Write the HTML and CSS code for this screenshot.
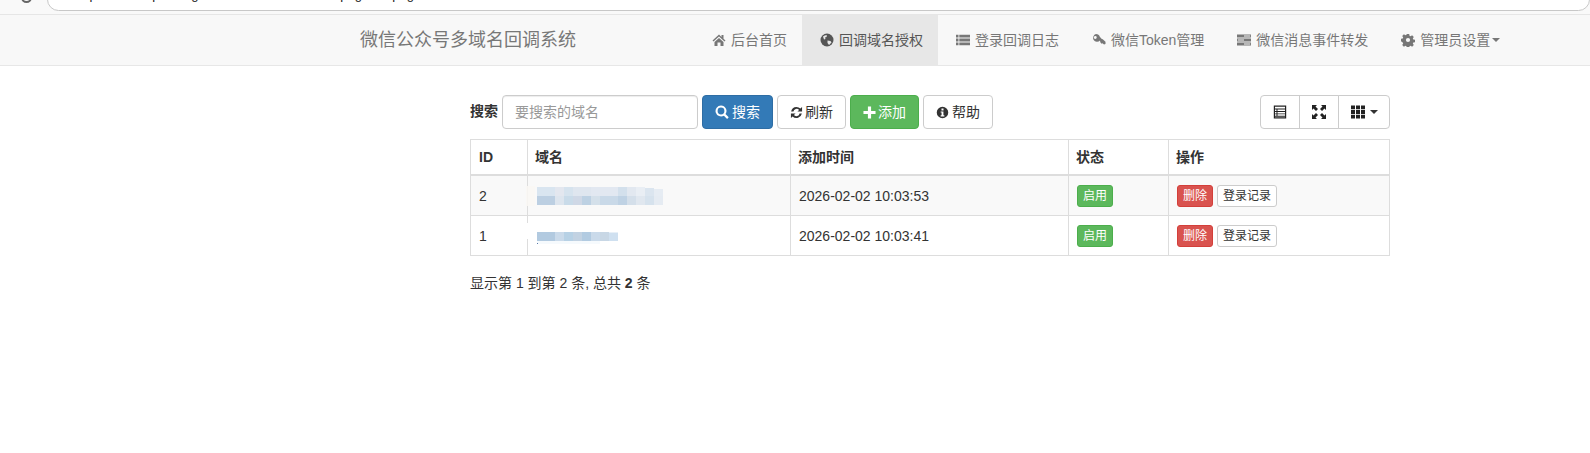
FILE: index.html
```html
<!DOCTYPE html>
<html lang="zh-CN">
<head>
<meta charset="utf-8">
<title>微信公众号多域名回调系统</title>
<link rel="stylesheet" href="styles.css">
</head>
<body>
<div class="chrome">
  <div class="reload"></div>
  <div class="address"><span class="page-icon"></span><span class="url">http://wechat.postbag.com/auth/domain/index/page/list/page</span></div>
</div>
<nav class="navbar">
  <a class="brand">微信公众号多域名回调系统</a>
  <ul class="nav">
    <li><a><svg class="ico" viewBox="0 0 14 14"><path d="M7 1.500 0.500 7.500l1 1L7 3.600l5.500 4.900 1-1L11.500 5.700V2h-2v1.900zM2.500 9v4h3V9.500h3V13h3V9L7 5z"/></svg>后台首页</a></li>
    <li class="active"><a><svg class="ico" viewBox="0 0 14 14"><circle cx="7" cy="7" r="6.500"/><path class="cut" d="M3 3.500c1.500-1 3-1.500 4-1.200L6.500 4 5 4.500 5.500 6 4 6.500zM7.500 7.500l3 .5 1 1.500L9 12 7.500 10z"/></svg>回调域名授权</a></li>
    <li><a><svg class="ico" viewBox="0 0 14 14"><path d="M0 1.700h2.500v2.800H0zM3.300 1.700H14v2.800H3.300zM0 5.600h2.500v2.800H0zM3.300 5.600H14v2.800H3.300zM0 9.500h2.500v2.800H0zM3.300 9.500H14v2.800H3.300z"/></svg>登录回调日志</a></li>
    <li><a><svg class="ico" viewBox="0 0 14 14"><path fill-rule="evenodd" d="M4 1a4 4 0 0 1 3.800 2.800l1.700 2 1.200.4 2.800 2.500v2.300l-1.500.4-1.500-1.100-.9.400-1.300-1.400-.3-1.700A4 4 0 1 1 4 1zM3.200 3a1.500 1.500 0 1 0 .1 3A1.500 1.500 0 0 0 3.200 3z"/></svg>微信Token管理</a></li>
    <li><a><svg class="ico" viewBox="0 0 14 14"><path d="M0 1.500h14v3H0zM0 5.500h14v3H0zM0 9.500h14v3H0z"/><path class="cut" d="M7 2.600h6.200v.8H7zM.8 6.600h6.200v.8H.8zM7 10.600h6.200v.8H7z"/></svg>微信消息事件转发</a></li>
    <li><a><svg class="ico" viewBox="0 0 14 14"><path fill-rule="evenodd" d="M5.800 1h2.400l.3 1.700 1.100.5 1.500-1 1.700 1.700-1 1.500.5 1.100 1.700.3v2.400l-1.700.3-.5 1.100 1 1.500-1.700 1.700-1.500-1-1.100.5-.3 1.700H5.800l-.3-1.700-1.100-.5-1.500 1-1.700-1.700 1-1.500-.5-1.100L0 8.200V5.800l1.700-.3.500-1.100-1-1.500 1.700-1.700 1.500 1 1.100-.5zM7 4.900a2.100 2.100 0 1 0 0 4.200 2.100 2.100 0 0 0 0-4.200z"/></svg>管理员设置<span class="caret"></span></a></li>
  </ul>
</nav>
<main class="content">
  <div class="toolbar">
    <form class="search">
      <label class="search-label">搜索</label>
      <input class="search-input" type="text" placeholder="要搜索的域名">
      <button type="button" class="btn btn-primary"><svg class="bi wide" viewBox="0 0 14 14"><path fill-rule="evenodd" d="M6 .5a5.500 5.500 0 0 1 4.500 8.600l3.200 3.200-1.600 1.600-3.200-3.200A5.500 5.500 0 1 1 6 .5zm0 2.100a3.400 3.400 0 1 0 0 6.800 3.400 3.400 0 0 0 0-6.800z"/></svg>搜索</button>
      <button type="button" class="btn"><svg class="bi tight" viewBox="0 0 14 14"><path d="M7 1a6 6 0 0 1 4.200 1.800L13 1v5H8l1.800-1.800A3.500 3.500 0 0 0 3.700 6H1.200A6 6 0 0 1 7 1zM1 8h5l-1.800 1.800a3.500 3.500 0 0 0 6.100-1.800h2.500a6 6 0 0 1-10 3.200L1 13z"/></svg>刷新</button>
      <button type="button" class="btn btn-success"><svg class="bi tight" viewBox="0 0 14 14"><path d="M5.300 .5h3.400v4.800h4.800v3.400H8.700v4.800H5.300V8.700H.5V5.300h4.800z"/></svg>添加</button>
      <button type="button" class="btn"><svg class="bi" viewBox="0 0 14 14"><path fill-rule="evenodd" d="M7 .8a6.200 6.200 0 1 1 0 12.400A6.200 6.200 0 0 1 7 .8zM5.900 2.800v2h2.200v-2zM5 6v1h1v3H5v1.200h4V10H8V6z"/></svg>帮助</button>
    </form>
    <div class="btn-group">
      <button type="button" class="btn"><svg class="tool" viewBox="0 0 14 14"><path fill-rule="evenodd" d="M.8.500h12.400v13H.8zM2 1.700v1.800h10V1.700zM2 4.500v1.500h1.500V4.500zM4.500 4.500v1.500H12V4.500zM2 6.900v1.500h1.500V6.900zM4.500 6.900v1.500H12V6.900zM2 9.300v1.500h1.500V9.300zM4.500 9.300v1.500H12V9.300zM2 11.700v.6h10v-.6z"/></svg></button>
      <button type="button" class="btn"><svg class="tool" viewBox="0 0 14 14"><path d="M0 0h5L3.500 1.500 6 4 4 6 1.500 3.500 0 5zM14 0v5l-1.500-1.500L10 6 8 4l2.500-2.500L9 0zM0 14V9l1.500 1.500L4 8l2 2-2.500 2.500L5 14zM14 14H9l1.500-1.500L8 10l2-2 2.500 2.500L14 9z"/></svg></button>
      <button type="button" class="btn"><svg class="tool" viewBox="0 0 14 14"><path d="M0 .5h4V4.300H0zM5 .5h4V4.300H5zM10 .5h4V4.300h-4zM0 5.100h4V8.900H0zM5 5.100h4V8.900H5zM10 5.100h4V8.900h-4zM0 9.700h4v3.800H0zM5 9.700h4v3.800H5zM10 9.700h4v3.800h-4z"/></svg><span class="caret dark"></span></button>
    </div>
  </div>
  <table class="table">
    <thead>
      <tr><th class="c-id">ID</th><th class="c-domain">域名</th><th class="c-time">添加时间</th><th class="c-state">状态</th><th class="c-ops">操作</th></tr>
    </thead>
    <tbody>
      <tr class="odd">
        <td>2</td>
        <td class="domain smudge-a"><svg class="mosaic" width="126" height="18" viewBox="0 0 126 18"><rect x="0" y="0" width="18" height="9" fill="#d9e5f0"/><rect x="18" y="0" width="9" height="9" fill="#e3e7ef"/><rect x="27" y="0" width="9" height="9" fill="#d6e3ee"/><rect x="36" y="0" width="18" height="9" fill="#dfe6ef"/><rect x="54" y="0" width="27" height="9" fill="#e2e8f1"/><rect x="81" y="0" width="9" height="9" fill="#d3e0ec"/><rect x="90" y="0" width="9" height="9" fill="#e2e8f0"/><rect x="99" y="0" width="9" height="9" fill="#e9eef4"/><rect x="108" y="1" width="9" height="8" fill="#dbe5ef"/><rect x="117" y="2" width="9" height="7" fill="#e6ecf3"/><rect x="0" y="9" width="18" height="9" fill="#bccfe2"/><rect x="18" y="9" width="9" height="9" fill="#dde5ee"/><rect x="27" y="9" width="9" height="9" fill="#c9dbe9"/><rect x="36" y="9" width="9" height="9" fill="#cfd8e6"/><rect x="45" y="9" width="9" height="9" fill="#bdd1e3"/><rect x="54" y="9" width="9" height="9" fill="#d4e0ea"/><rect x="63" y="9" width="18" height="9" fill="#c9d9e8"/><rect x="81" y="9" width="9" height="9" fill="#bfd2e4"/><rect x="90" y="9" width="9" height="9" fill="#d4dfea"/><rect x="99" y="9" width="9" height="9" fill="#e0e7ef"/><rect x="108" y="9" width="9" height="9" fill="#d6e2ed"/><rect x="117" y="9" width="9" height="9" fill="#e5ebf2"/></svg></td>
        <td>2026-02-02 10:03:53</td>
        <td><span class="label label-success">启用</span></td>
        <td class="ops"><span class="label label-danger">删除</span><span class="label label-default">登录记录</span></td>
      </tr>
      <tr>
        <td>1</td>
        <td class="domain smudge-b"><svg class="mosaic" width="126" height="18" viewBox="0 -5 126 18"><rect x="0" y="4" width="63" height="8" fill="#f6fafd"/><rect x="0" y="0" width="18" height="9" fill="#b2cae0"/><rect x="18" y="0" width="9" height="9" fill="#cadaea"/><rect x="27" y="0" width="9" height="9" fill="#b7d1e5"/><rect x="36" y="0" width="9" height="9" fill="#c2d2e2"/><rect x="45" y="0" width="9" height="9" fill="#b2cbe1"/><rect x="54" y="0" width="9" height="9" fill="#cadaea"/><rect x="63" y="0" width="9" height="9" fill="#c8d7e5"/><rect x="72" y="0.500" width="9" height="8.500" fill="#cfe0f0"/><rect x="0" y="11" width="1" height="1" fill="#5b7ba8"/></svg></td>
        <td>2026-02-02 10:03:41</td>
        <td><span class="label label-success">启用</span></td>
        <td class="ops"><span class="label label-danger">删除</span><span class="label label-default">登录记录</span></td>
      </tr>
    </tbody>
  </table>
  <p class="summary">显示第 1 到第 2 条, 总共 <b>2</b> 条</p>
</main>
</body>
</html>
```
FILE: styles.css
```css
* { box-sizing: border-box; }
html, body { margin: 0; padding: 0; }
body {
  background: #fff;
  color: #333;
  font: 14px/20px "Liberation Sans", "Noto Sans CJK SC", sans-serif;
  height: 453px;
  overflow: hidden;
}
.chrome {
  height: 15px;
  background: #f9f9f9;
  border-bottom: 1px solid #e6e6e6;
  position: relative;
  overflow: hidden;
}
.reload {
  position: absolute;
  left: 21px;
  top: -8px;
  width: 11px;
  height: 11px;
  border: 2px solid #666;
  border-radius: 50%;
}
.address {
  margin-left: 47px;
  margin-top: -12px;
  height: 23px;
  background: #fff;
  border: 1px solid #c8c8c8;
  border-radius: 12px;
  padding: 0 0 0 9px;
  overflow: hidden;
  white-space: nowrap;
  line-height: 11px;
}
.page-icon {
  display: inline-block;
  width: 10px;
  height: 2px;
  margin-right: 8px;
  background: #444;
}
.url { font-size: 13px; color: #222; }
.navbar {
  height: 51px;
  background: #f8f8f8;
  border-bottom: 1px solid #e7e7e7;
  display: flex;
  padding-left: 345px;
}
.brand {
  padding: 15px;
  font-size: 18px;
  line-height: 20px;
  color: #777;
  width: 349px;
}
.nav { display: flex; list-style: none; margin: 0; padding: 0; }
.nav a {
  display: flex;
  align-items: center;
  height: 50px;
  padding: 0 15px 0 18px;
  color: #777;
}
.nav .active a { background: #e7e7e7; color: #555; }
.ico { width: 14px; height: 14px; margin-right: 5px; fill: currentColor; flex: none; }
.ico .cut { fill: #f8f8f8; }
.active .ico .cut { fill: #e7e7e7; }
.caret {
  display: inline-block;
  margin-left: 2px;
  border-top: 4px solid currentColor;
  border-left: 4px solid transparent;
  border-right: 4px solid transparent;
}
.content { margin-left: 470px; width: 920px; padding-top: 29px; }
.toolbar { display: flex; justify-content: space-between; height: 34px; margin-bottom: 10px; }
.search { display: flex; gap: 4px; margin: 0; }
.search-label { font-weight: 700; line-height: 32px; width: 28px; white-space: nowrap; }
.search-input {
  width: 196px;
  height: 34px;
  padding: 6px 12px;
  border: 1px solid #ccc;
  border-radius: 4px;
  font: inherit;
  box-shadow: inset 0 1px 1px rgba(0,0,0,.075);
}
.search-input::placeholder { color: #999; }
.btn {
  display: inline-flex;
  align-items: center;
  justify-content: center;
  height: 34px;
  padding: 0 12px;
  border: 1px solid #ccc;
  border-radius: 4px;
  background: #fff;
  color: #333;
  font: inherit;
}
.btn-primary { background: #337ab7; border-color: #2e6da4; color: #fff; }
.btn-success { background: #5cb85c; border-color: #4cae4c; color: #fff; }
.bi { width: 13px; height: 13px; margin-right: 3px; fill: currentColor; flex: none; }
.bi.tight { margin-right: 2px; }
.bi.wide { width: 14px; height: 14px; }
.btn-group { display: flex; }
.btn-group .btn { border-radius: 0; margin-left: -1px; width: 40px; padding: 0; }
.btn-group .btn:first-child { border-radius: 4px 0 0 4px; margin-left: 0; }
.btn-group .btn:last-child { border-radius: 0 4px 4px 0; width: 52px; }
.tool { width: 14px; height: 14px; fill: #222; flex: none; }
.caret.dark { margin-left: 5px; color: #333; }
.table {
  width: 920px;
  table-layout: fixed;
  border-collapse: collapse;
  border: 1px solid #ddd;
}
.table th, .table td { border: 1px solid #ddd; text-align: left; vertical-align: middle; }
.table td { padding: 9px 8px 7px; height: 40px; }
.table th { height: 35px; padding: 7px 8px 7px 7px; border-bottom-width: 2px; font-weight: 700; }
.table th.c-id { padding-left: 8px; }
.table tr.odd td { background: #f9f9f9; }
.c-id { width: 57px; }
.c-domain { width: 263px; }
.c-time { width: 278px; }
.c-state { width: 100px; }
.table td.domain { padding-top: 0; padding-bottom: 0; position: relative; }
.smudge-a::before, .smudge-b::before {
  content: "";
  position: absolute;
  left: -2px;
  width: 9px;
}
.smudge-a::before { top: 10px; height: 20px; background: rgba(250,248,245,.85); }
.smudge-b::before { top: 7px; height: 16px; background: #fff; }
.mosaic { display: block; margin-left: 1px; margin-top: 2px; }
.label {
  display: inline-block;
  font-size: 12px;
  line-height: 20px;
  height: 22px;
  padding: 0 5px;
  border: 1px solid transparent;
  border-radius: 3px;
  vertical-align: middle;
}
.label-success { background: #5cb85c; border-color: #4cae4c; color: #fff; }
.label-danger { background: #d9534f; border-color: #d43f3a; color: #fff; margin-right: 4px; }
.label-default { background: #fff; border-color: #ccc; color: #333; }
.summary { margin: 17px 0 0; line-height: 20px; }
```
